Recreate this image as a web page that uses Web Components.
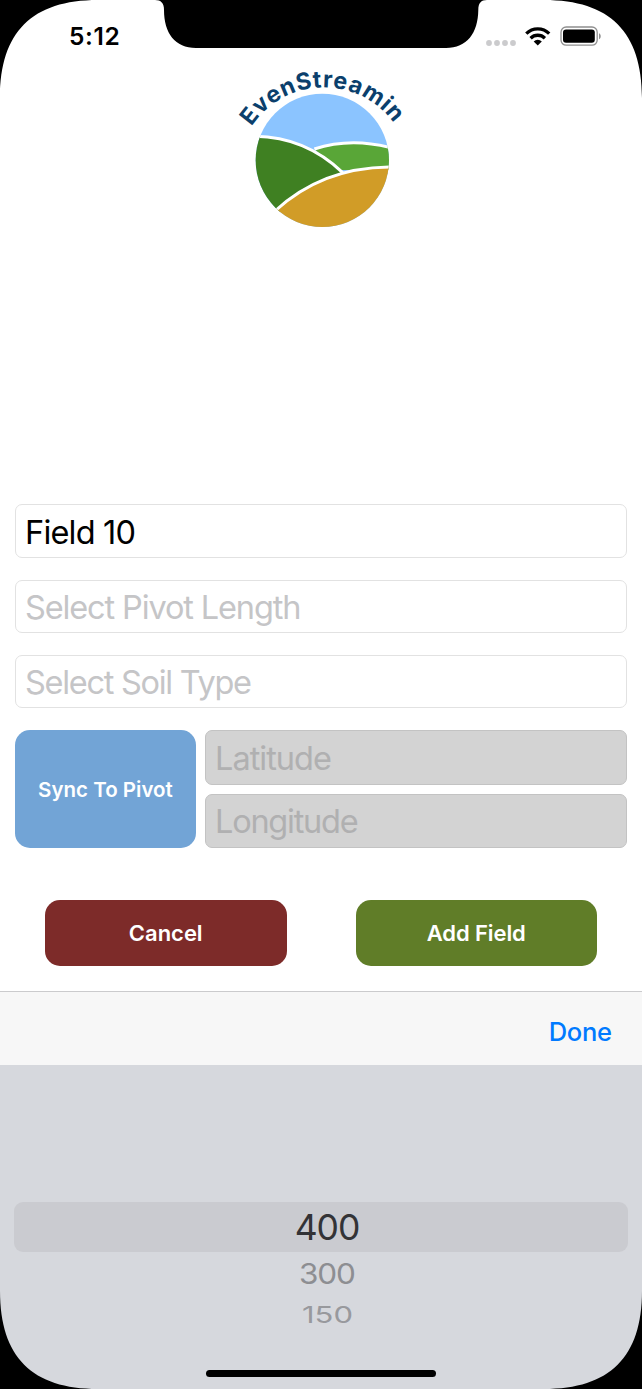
<!DOCTYPE html>
<html lang="en">
<head>
<meta charset="utf-8">
<title>EvenStreamin – Add Field</title>
<style>
html, body { margin: 0; background: #000; }
body { font-family: Inter, "Liberation Sans", sans-serif; color: #000; }
</style>
</head>
<body>
<device-screen>
  <status-bar slot="status"></status-bar>
  <brand-logo></brand-logo>
  <field-form></field-form>
  <picker-sheet slot="sheet"></picker-sheet>
</device-screen>
<script>
const define = (name, html, setup) => {
  const t = document.createElement('template');
  t.innerHTML = html;
  customElements.define(name, class extends HTMLElement {
    connectedCallback() {
      if (this.shadowRoot) return;
      this.attachShadow({ mode: 'open' }).append(t.content.cloneNode(true));
      if (setup) setup(this);
    }
  });
};

// One-line label whose tracking is adjusted so that its glyphs span `span` pixels.
const ctx = document.createElement('canvas').getContext('2d');
define('ui-label', `<style>:host { display: block; white-space: nowrap; line-height: 1.2; }</style><slot></slot>`, el => {
  const size = el.getAttribute('size'), weight = el.getAttribute('weight') || 400;
  const text = el.textContent;
  el.style.fontSize = size + 'px';
  el.style.fontWeight = weight;
  ctx.font = `${weight} ${size}px Inter, "Liberation Sans", sans-serif`;
  const m = ctx.measureText(text);
  const ink = m.actualBoundingBoxLeft + m.actualBoundingBoxRight;
  const ls = (el.getAttribute('span') - ink) / (text.length - 1);
  el.style.letterSpacing = ls.toFixed(3) + 'px';
  el.style.marginRight = (-ls).toFixed(3) + 'px';
});

define('status-bar', `
<style>
:host { display: flex; justify-content: space-between; align-items: flex-start; height: 60px; box-sizing: border-box; padding: 22px 40px 0 69px; }
svg { display: block; margin-top: 2px; }
</style>
<ui-label size="24.5" weight="600" span="48.5">5:12</ui-label>
<svg width="118" height="24" viewBox="484 24 118 24">
  <g fill="#cbcbcd"><circle cx="489" cy="43" r="2.9"/><circle cx="497" cy="43" r="2.9"/><circle cx="505" cy="43" r="2.9"/><circle cx="513" cy="43" r="2.9"/></g>
  <g fill="none" stroke="#000" stroke-width="3.3">
    <path d="M526.3 33.6A16.2 16.2 0 0 1 549.2 33.6"/>
    <path d="M530.6 38.2A10.2 10.2 0 0 1 544.9 38.2"/>
  </g>
  <path d="M537.75 45.6L533.7 41.4A5.9 5.9 0 0 1 541.8 41.4Z"/>
  <rect x="561" y="27" width="36.2" height="18.2" rx="5.2" fill="none" stroke="#8f8f8f" stroke-width="1.3"/>
  <rect x="563" y="29.6" width="31.8" height="13.2" rx="3"/>
  <path d="M599 33.2C601.3 34 601.3 38.4 599 39.2Z" fill="#8f8f8f"/>
</svg>`);

define('brand-logo', `
<style>:host { display: flex; justify-content: center; height: 180px; margin-left: 8px; } svg { display: block; }
text { font: 700 70px Inter, sans-serif; letter-spacing: 2.2px; fill: #0b3f6c; }</style>
<svg width="200" height="180" viewBox="0 0 600 540">
  <defs>
    <clipPath id="disc"><circle cx="292" cy="301" r="200"/></clipPath>
    <path id="arc" d="M80 200A258 258 0 0 1 515 203L560 268"/>
  </defs>
  <g clip-path="url(#disc)">
    <rect x="80" y="90" width="420" height="420" fill="#8bc4ff"/>
    <path d="M268 267C350 240 430 245 500 264V330H340Z" fill="#59a637"/>
    <path d="M80 228C190 228 280 270 353 340L157 460H80Z" fill="#3f8022"/>
    <path d="M150 453C240 370 350 321 500 321V520H80Z" fill="#d19c27"/>
    <g fill="none" stroke="#fff" stroke-width="9">
      <path d="M268 267C350 240 430 245 500 264"/>
      <path d="M80 229C190 228 280 268 353 338"/>
      <path d="M150 453C240 370 350 321 500 321"/>
    </g>
  </g>
  <text><textPath href="#arc">EvenStreamin</textPath></text>
</svg>`);

define('text-box', `
<style>
:host { display: flex; align-items: center; box-sizing: border-box; height: 53px; padding: 1px 0 0 9px; border: 1px solid #e2e2e2; border-radius: 7px; background: #fff; color: #c5c5c7; }
:host([filled]) { color: #000; height: 54px; padding-top: 2px; }
:host([disabled]) { color: #b0b0b1; background: #d3d3d3; border-color: #c3c3c3; height: 54.5px; padding-top: 2px; }
</style><slot></slot>`);

define('action-button', `
<style>
:host { display: flex; align-items: center; justify-content: center; border-radius: 15px; color: #fff; background: var(--tint); }
</style><slot></slot>`);

define('field-form', `
<style>
:host { display: flex; flex-direction: column; padding: 264px 15px 0; }
.stack { display: flex; flex-direction: column; gap: 22px; }
.sync { display: grid; grid-template-columns: 181px 1fr; gap: 9px; margin-top: 22px; }
.sync > action-button { box-sizing: border-box; padding-top: 2px; }
.pair { display: flex; flex-direction: column; gap: 9px; }
.actions { display: flex; justify-content: space-between; height: 66px; margin: 52px 30px 0; }
.actions action-button { width: 241.5px; }
</style>
<div class="stack">
  <text-box filled><ui-label size="32.5" span="107.5">Field 10</ui-label></text-box>
  <text-box><ui-label size="32.5" span="273.2">Select Pivot Length</ui-label></text-box>
  <text-box><ui-label size="32.5" span="225">Select Soil Type</ui-label></text-box>
</div>
<div class="sync">
  <action-button style="--tint:#72a4d6"><ui-label size="20.5" weight="600" span="134.5">Sync To Pivot</ui-label></action-button>
  <div class="pair">
    <text-box disabled><ui-label size="32.5" span="114">Latitude</ui-label></text-box>
    <text-box disabled style="padding-top:1px"><ui-label size="32.5" span="140.7">Longitude</ui-label></text-box>
  </div>
</div>
<div class="actions">
  <action-button style="--tint:#7d2b29"><ui-label size="22" weight="600" span="72">Cancel</ui-label></action-button>
  <action-button style="--tint:#607d28"><ui-label size="22" weight="600" span="98.3">Add Field</ui-label></action-button>
</div>`);

define('picker-sheet', `
<style>
:host { display: flex; flex-direction: column; height: 398px; background: #d6d8dd; }
.bar { display: flex; align-items: center; justify-content: flex-end; box-sizing: border-box; height: 74px; padding: 7px 30px 0 0; border-top: 1px solid #cbcbcd; background: #f7f7f7; color: #007aff; }
.wheel { display: flex; flex-direction: column; padding: 137px 14px 0; }
.row { display: flex; align-items: center; justify-content: center; padding-left: 13px; }
.on { box-sizing: border-box; height: 50px; padding-top: 2px; border-radius: 9px; background: #cacbd0; color: #333336; }
.n1 { height: 44px; color: #8d8e92; } .n1 ui-label { transform: scaleY(.92); }
.n2 { height: 37px; color: #98999d; } .n2 ui-label { transform: scaleY(.75); }
.home { width: 229.5px; height: 7.5px; margin: auto auto 12px; border-radius: 4px; background: #000; }
</style>
<div class="bar"><ui-label size="25.5" weight="500" span="60.3">Done</ui-label></div>
<div class="wheel">
  <div class="row on"><ui-label size="35.5" span="62.3">400</ui-label></div>
  <div class="row n1"><ui-label size="31.5" span="54">300</ui-label></div>
  <div class="row n2"><ui-label size="31" span="48.3">150</ui-label></div>
</div>
<div class="home"></div>`);

define('device-screen', `
<style>
:host { display: flex; flex-direction: column; position: relative; width: 642px; height: 1389px; overflow: hidden; background: #fff; }
main { flex: 1; }
.bezel { position: absolute; inset: 0; display: block; }
</style>
<slot name="status"></slot>
<main><slot></slot></main>
<slot name="sheet"></slot>
<svg class="bezel" width="642" height="1389" viewBox="0 0 642 1389">
  <path d="M0 0H98C32 0 0 32 0 98Z"/>
  <path d="M642 0V98C642 32 610 0 544 0Z"/>
  <path d="M0 1389V1291C0 1357 32 1389 98 1389Z"/>
  <path d="M642 1389H544C610 1389 642 1357 642 1291Z"/>
  <path d="M155 0C161 0 164 3 164 10C164 33 175 48 196 48H446C467 48 478 33 478.3 10C478.3 3 481 0 487 0Z"/>
</svg>`);
</script>
</body>
</html>
